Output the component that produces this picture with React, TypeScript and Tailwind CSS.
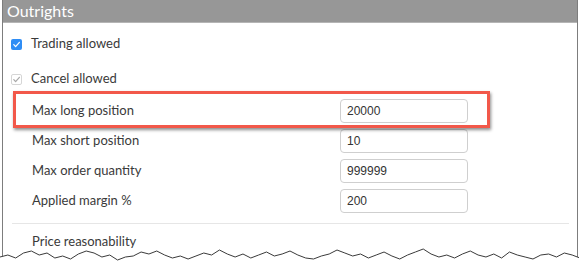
// Outrights settings panel with annotation highlight
const rows = [
  { label: 'Max long position', value: '20000' },
  { label: 'Max short position', value: '10' },
  { label: 'Max order quantity', value: '999999' },
  { label: 'Applied margin %', value: '200' },
];

// torn-paper edge along the bottom
const wave = (() => {
  const pts: string[] = [];
  const ys = [9, 7, 10, 5, 3, 7, 5, 10, 8, 11, 6, 3, 5, 9, 7, 12, 9, 8, 4, 6, 3, 7, 10, 8, 11, 8, 5, 7, 2, 6, 9, 6, 10, 7, 4, 8, 6, 3, 7, 10, 11, 8, 6, 2, 5, 8, 6, 10, 7, 4, 8, 11, 7, 4, 1, 6, 9, 7, 10, 6, 3, 7, 9, 6, 10, 4, 7, 9, 11, 7, 6, 9, 5, 7, 10];
  for (let i = 0; i < ys.length; i++) pts.push(`${(i * 580) / (ys.length - 1)},${ys[i]}`);
  return pts.join(' ');
})();

function Check({ color }: { color: string }) {
  return (
    <svg width="9" height="9" viewBox="0 0 10 10" fill="none">
      <path d="M2 5.2l2 2.1L8.2 2.6" stroke={color} strokeWidth="1.4" strokeLinecap="round" strokeLinejoin="round" />
    </svg>
  );
}

export default function App() {
  return (
    <div className="relative w-[579px] h-[264px] bg-white overflow-hidden font-['Lato','Noto_Sans',sans-serif] text-[#3a3a3a]">
      <div className="ml-[2px] w-[576px] h-[264px] border-x border-[#7d7d7d]">
        {/* Header */}
        <div className="h-[23px] bg-[#979797] border-b border-[#b5b5b5] pl-[4px] flex items-center text-white text-[16px] leading-none">
          Outrights
        </div>

        <div className="pl-[8px] pr-[8px]">
          <div className="mt-[11px] h-[20px] flex items-center gap-[9px] text-[13px]">
            <span className="w-[11px] h-[11px] rounded-[2px] bg-[#2f8df5] flex items-center justify-center">
              <Check color="#fff" />
            </span>
            Trading allowed
          </div>
          <div className="mt-[15px] h-[20px] flex items-center gap-[9px] text-[13px]">
            <span className="w-[11px] h-[11px] rounded-[2px] border border-[#d6d6d6] bg-white flex items-center justify-center">
              <Check color="#a8a8a8" />
            </span>
            Cancel allowed
          </div>

          <div className="mt-[10px] flex flex-col gap-[6px]">
            {rows.map(r => (
              <div key={r.label} className="h-[24px] flex items-center">
                <span className="w-[329px] pl-[21px] text-[13px]">{r.label}</span>
                <span className="w-[128px] h-[24px] rounded-[4px] border border-[#cfcfcf] bg-white flex items-center pl-[6px] text-[12px] text-[#333] font-['Liberation_Sans',sans-serif]">
                  {r.value}
                </span>
              </div>
            ))}
          </div>

          <div className="mt-[10px] ml-[1px] h-px bg-[#e6e6e6]" />
          <div className="mt-[8px] h-[20px] flex items-center pl-[21px] text-[13px]">Price reasonability</div>
        </div>
      </div>

      {/* red highlight annotation */}
      <div className="absolute left-[13px] top-[91px] w-[477px] h-[37px] border-[3px] border-[#f2584a] shadow-[1px_2px_3px_rgba(0,0,0,0.45)]" />

      {/* torn edge */}
      <svg className="absolute left-0 top-[248px]" width="579" height="16" viewBox="0 0 579 16">
        <polygon points={`0,16 ${wave} 580,16`} fill="#fff" />
        <polyline points={wave} fill="none" stroke="#3a3a3a" strokeWidth="1" />
      </svg>
    </div>
  );
}
